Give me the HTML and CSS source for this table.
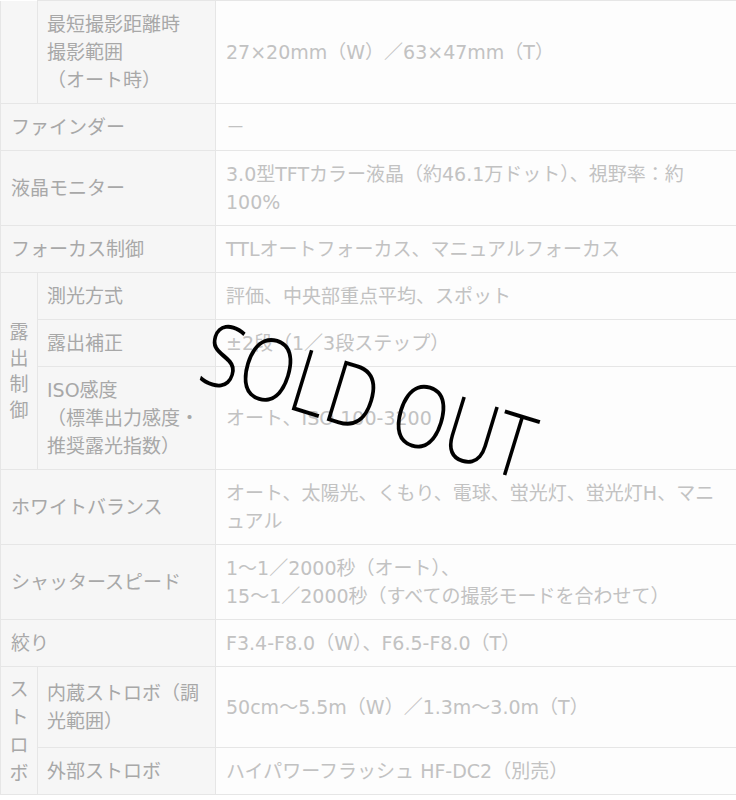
FILE: index.html
```html
<!DOCTYPE html>
<html lang="ja">
<head>
<meta charset="utf-8">
<link rel="stylesheet" href="styles.css">
</head>
<body>
<div class="wrap">
<table class="spec">
  <colgroup><col class="c-group"><col class="c-sub"><col class="c-val"></colgroup>
  <tr>
    <th class="grp grp-cont"></th>
    <th class="sub nowrap">最短撮影距離時<br>撮影範囲<br>（オート時）</th>
    <td class="val">27×20mm（W）／63×47mm（T）</td>
  </tr>
  <tr>
    <th class="hd" colspan="2">ファインダー</th>
    <td class="val">－</td>
  </tr>
  <tr>
    <th class="hd" colspan="2">液晶モニター</th>
    <td class="val nowrap">3.0型TFTカラー液晶（約46.1万ドット）、視野率：約<br>100%</td>
  </tr>
  <tr>
    <th class="hd" colspan="2">フォーカス制御</th>
    <td class="val">TTLオートフォーカス、マニュアルフォーカス</td>
  </tr>
  <tr>
    <th class="grp grp-exp" rowspan="3">露<br>出<br>制<br>御</th>
    <th class="sub">測光方式</th>
    <td class="val">評価、中央部重点平均、スポット</td>
  </tr>
  <tr>
    <th class="sub">露出補正</th>
    <td class="val">±2段（1／3段ステップ）</td>
  </tr>
  <tr>
    <th class="sub nowrap">ISO感度<br>（標準出力感度・<br>推奨露光指数）</th>
    <td class="val">オート、ISO 100-3200</td>
  </tr>
  <tr>
    <th class="hd" colspan="2">ホワイトバランス</th>
    <td class="val nowrap">オート、太陽光、くもり、電球、蛍光灯、蛍光灯H、マニ<br>ュアル</td>
  </tr>
  <tr>
    <th class="hd" colspan="2">シャッタースピード</th>
    <td class="val nowrap">1～1／2000秒（オート）、<br>15～1／2000秒（すべての撮影モードを合わせて）</td>
  </tr>
  <tr>
    <th class="hd" colspan="2">絞り</th>
    <td class="val">F3.4-F8.0（W）、F6.5-F8.0（T）</td>
  </tr>
  <tr class="tall">
    <th class="grp grp-flash" rowspan="2">ス<br>ト<br>ロ<br>ボ</th>
    <th class="sub nowrap">内蔵ストロボ（調<br>光範囲）</th>
    <td class="val">50cm～5.5m（W）／1.3m～3.0m（T）</td>
  </tr>
  <tr>
    <th class="sub">外部ストロボ</th>
    <td class="val">ハイパワーフラッシュ HF-DC2（別売）</td>
  </tr>
</table>
<div class="sold">SOLD OUT</div>
</div>
</body>
</html>
```
FILE: styles.css
```css
html, body {
  margin: 0;
  padding: 0;
  background: #ffffff;
  overflow: hidden;
}
.wrap {
  position: relative;
  width: 736px;
  height: 800px;
  overflow: hidden;
}
.spec {
  width: 737px;
  border-collapse: collapse;
  table-layout: fixed;
  font-family: "DejaVu Sans", "Noto Sans CJK JP", sans-serif;
  font-size: 19px;
  line-height: 28px;
}
.c-group { width: 37px; }
.c-sub { width: 178px; }
.spec th, .spec td {
  border: 1px solid #e6e6e6;
  padding: 9px 10px;
  vertical-align: middle;
  text-align: left;
  font-weight: normal;
}
.spec th {
  background: #f6f6f6;
  color: #a8a8a8;
}
.spec td {
  background: #fdfdfd;
  color: #c2c2c2;
}
.spec .sub {
  padding-left: 9px;
  padding-right: 4px;
}
.spec .grp {
  padding: 0;
  text-align: center;
  line-height: 26px;
}
.spec .grp-flash { line-height: 28px; }
.spec .grp-cont { border-top: none; }
.tall th, .tall td { padding-top: 12px; padding-bottom: 12px; }
.nowrap { white-space: nowrap; }
.sold {
  position: absolute;
  left: 369px;
  top: 398px;
  font-family: "Open Sans", sans-serif;
  font-weight: 300;
  font-size: 88px;
  line-height: 1;
  color: #000;
  white-space: nowrap;
  transform: translate(-50%, -50%) rotate(17deg) scaleX(0.81);
}
```
